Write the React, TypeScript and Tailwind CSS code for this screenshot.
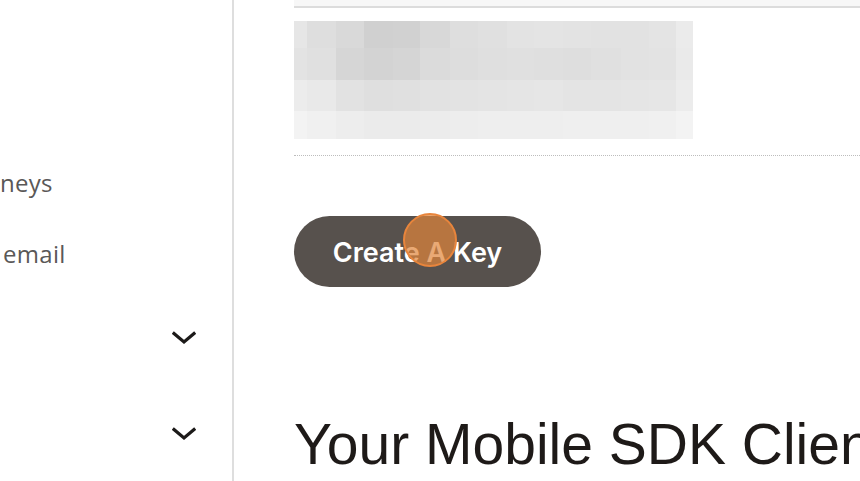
import React from 'react';

const mosaicCols = [13, 29, 28, 29, 27, 30, 28, 29, 27, 29, 28, 30, 28, 27, 17];

const mosaicRows: { h: number; cells: string[] }[] = [
  {
    h: 27,
    cells: ['#e6e6e6', '#dedede', '#d9d9d9', '#d0d0d0', '#d1d1d1', '#d8d8d8', '#dedede', '#e0e0e0', '#e3e3e3', '#e4e4e4', '#e3e3e3', '#e2e2e2', '#e2e2e2', '#e4e4e4', '#ebebeb'],
  },
  {
    h: 32,
    cells: ['#e3e3e3', '#e0e0e0', '#d6d6d6', '#d3d3d3', '#d5d5d5', '#dbdbdb', '#dddddd', '#dfdfdf', '#e0e0e0', '#dfdfdf', '#dedede', '#e0e0e0', '#e2e2e2', '#e3e3e3', '#eaeaea'],
  },
  {
    h: 31,
    cells: ['#ececec', '#e9e9e9', '#e2e2e2', '#dfdfdf', '#e0e0e0', '#e2e2e2', '#e3e3e3', '#e4e4e4', '#e5e5e5', '#e6e6e6', '#e4e4e4', '#e4e4e4', '#e5e5e5', '#e6e6e6', '#ececec'],
  },
  {
    h: 28,
    cells: ['#f3f3f3', '#f0f0f0', '#ededed', '#ebebeb', '#ebebeb', '#ececec', '#ededed', '#eeeeee', '#eeeeee', '#eeeeee', '#efefef', '#efefef', '#efefef', '#f0f0f0', '#f3f3f3'],
  },
];

function Chevron() {
  return (
    <svg width="24" height="14" viewBox="0 0 24 14" fill="none">
      <path d="M2 2.5 L12 11 L22 2.5" stroke="#1c1a19" strokeWidth="3.2" strokeLinecap="square" strokeLinejoin="miter" />
    </svg>
  );
}

export default function App() {
  return (
    <div className="flex h-[481px] w-[860px] overflow-hidden bg-white font-['Inter',sans-serif]">
      {/* Sidebar */}
      <aside className="w-[234px] flex-shrink-0 border-r-2 border-[#dedede] pt-[166px]">
        <div className="h-[34px] font-['Open_Sans',sans-serif] text-[24px] leading-[34px] tracking-[0.3px] text-[#5a5857]">neys</div>
        <div className="mt-[37px] h-[34px] pl-[3px] font-['Open_Sans',sans-serif] text-[24px] leading-[34px] tracking-[0.3px] text-[#5a5857]">email</div>
        <div className="mt-[50px] flex h-[34px] items-center justify-end pr-[36px]">
          <Chevron />
        </div>
        <div className="mt-[62px] flex h-[34px] items-center justify-end pr-[36px]">
          <Chevron />
        </div>
      </aside>

      {/* Main */}
      <main className="min-w-0 flex-1 pl-[60px]">
        <div className="h-[8px] border-b-2 border-[#dcdcdc] bg-[#f7f7f7]" />

        {/* Blurred preview */}
        <div className="mt-[13px] w-[399px]">
          {mosaicRows.map((row, ri) => (
            <div key={ri} className="flex">
              {row.cells.map((c, ci) => (
                <div key={ci} style={{ width: mosaicCols[ci], height: row.h, background: c }} />
              ))}
            </div>
          ))}
        </div>

        <div className="mt-[16px] border-t border-dotted border-[#bdbdbd]" />

        <div className="relative mt-[60px] w-[247px]">
          <button className="flex h-[71px] w-[247px] items-center justify-center rounded-full bg-[#57514d] pt-[3px] text-[27px] font-semibold text-white">
            Create A Key
          </button>
          <div className="absolute left-[109px] top-[-3px] h-[54px] w-[54px] rounded-full border-2 border-[#e8853c] bg-[#e0843a]/70" />
        </div>

        <h1 className="mt-[129px] whitespace-nowrap font-['Liberation_Sans',Arial,sans-serif] text-[57px] leading-none text-[#1e1a18]">
          Your Mobile SDK Client IDs
        </h1>
      </main>
    </div>
  );
}
